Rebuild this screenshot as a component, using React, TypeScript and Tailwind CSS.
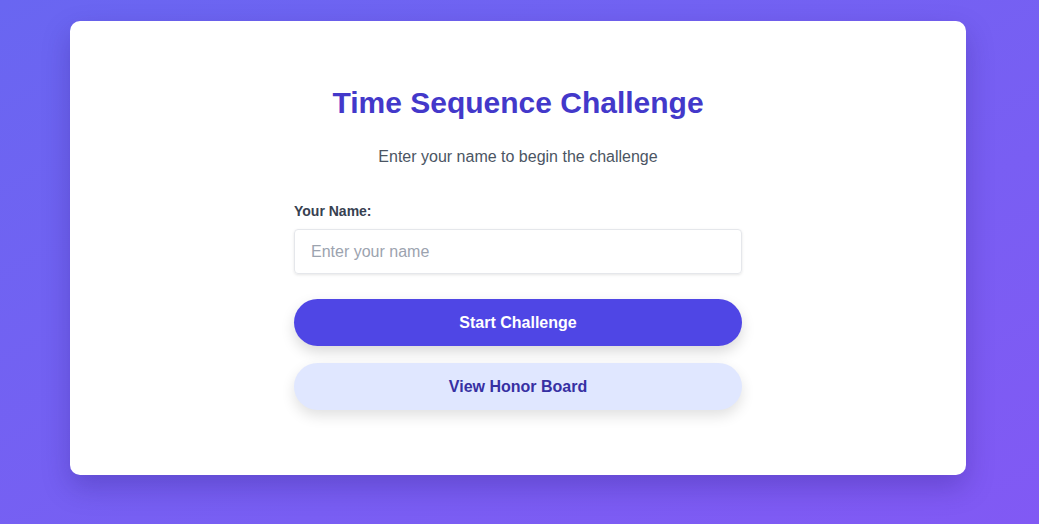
import React from "react";

export default function App() {
  return (
    <div
      className="min-h-screen w-full bg-gradient-to-br from-[#6966f1] to-[#8159f4] pt-[21px] pb-8"
      style={{ fontFamily: '"Liberation Sans", Arial, sans-serif' }}
    >
      <div className="ml-[70px] w-[896px] rounded-[10px] bg-white pt-16 pb-[65px] shadow-[0_12px_28px_rgba(40,20,120,0.28)]">
        <div className="mx-auto w-[448px]">
          <h1 className="text-center text-[30px] leading-9 font-bold text-[#4338ca]">
            Time Sequence Challenge
          </h1>
          <p className="mt-6 text-center text-base leading-6 text-[#4b5563]">
            Enter your name to begin the challenge
          </p>
          <label className="mt-8 block text-sm leading-5 font-bold text-[#374151]">
            Your Name:
          </label>
          <input
            type="text"
            placeholder="Enter your name"
            className="mt-2 block h-[45px] w-full rounded-[4px] border border-[#e5e7eb] px-4 text-base text-[#111827] shadow-[0_1px_3px_rgba(0,0,0,0.1)] outline-none placeholder:text-[#9ca3af]"
          />
          <button className="mt-[25px] block h-[47px] w-full rounded-full bg-[#4f46e5] text-base font-bold text-white shadow-[0_6px_14px_rgba(0,0,0,0.15)]">
            Start Challenge
          </button>
          <button className="mt-[17px] block h-[47px] w-full rounded-full bg-[#e0e7ff] text-base font-bold text-[#3730a3] shadow-[0_6px_14px_rgba(0,0,0,0.12)]">
            View Honor Board
          </button>
        </div>
      </div>
    </div>
  );
}
